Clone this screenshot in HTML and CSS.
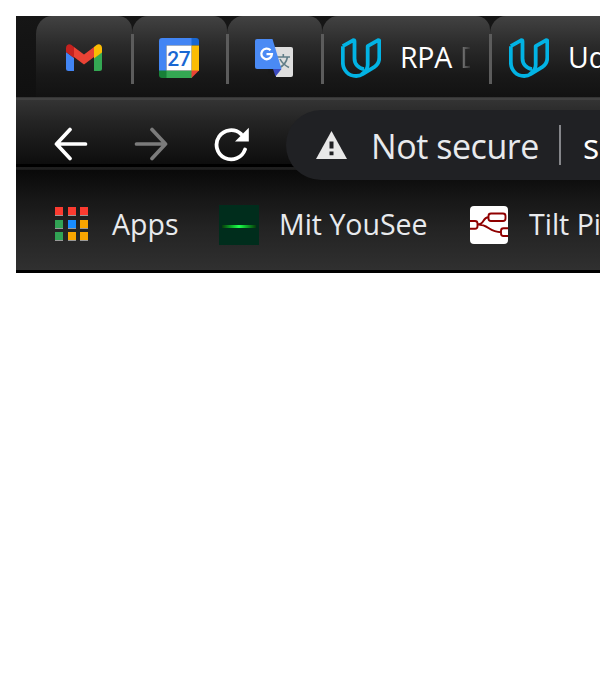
FILE: index.html
```html
<!DOCTYPE html>
<html lang="en">
<head>
<meta charset="utf-8">
<title>Browser</title>
<link rel="stylesheet" href="styles.css">
</head>
<body>
<svg width="0" height="0" class="defs" aria-hidden="true">
  <symbol id="udacity" viewBox="0 0 40 40">
    <path d="M1.800 8.200 12 2.300Q13.500 1.600 13.500 3.500V20.500C13.500 26 17.200 30.400 23 31.100M1.800 8.200V24C1.800 32.600 7.700 38 15.200 38C18 38 20 37.300 22 36L33.500 28.800C37 26.500 38.300 23.500 38.300 19.500V3.500Q38.300 1.600 36.800 2.300L26.700 8.200V27C26.700 30 25.200 33.200 20.500 36.500" fill="none" stroke="#02b3e4" stroke-width="3.800" stroke-linejoin="round"/>
  </symbol>
</svg>
<div class="browser">
  <div class="tabs">
    <div class="tab">
      <svg class="gmail" viewBox="0 0 36 27">
        <path d="M0 8 8 14V27H2.500Q0 27 0 24.500Z" fill="#4285f4"/>
        <path d="M28 14 36 8V24.500Q36 27 33.500 27H28Z" fill="#34a853"/>
        <path d="M28 3 30.500 1C33 -1 36 1 36 4V8.500L28 14.500Z" fill="#fbbc04"/>
        <path d="M8 3 18 10.500 28 3V13L18 20.500 8 13Z" fill="#ea4335"/>
        <path d="M0 4C0 1 3 -1 5.500 1L8 3V14L0 8Z" fill="#c5221f"/>
      </svg>
    </div>
    <div class="tab">
      <svg class="calendar" viewBox="0 0 40 40">
        <path d="M3 0H33V7.500H7.500V33H0V3Q0 0 3 0Z" fill="#4285f4"/>
        <path d="M33 0H37Q40 0 40 3V7.500H32.500V0Z" fill="#1967d2"/>
        <path d="M32.500 7.500H40V33H32.500Z" fill="#fbbc04"/>
        <path d="M7 32.500H33V40H7Z" fill="#34a853"/>
        <path d="M0 32.500H7.500V40H3Q0 40 0 37Z" fill="#188038"/>
        <path d="M32.500 32.500H40L32.500 40Z" fill="#ea4335"/>
        <path d="M7.500 7.500H32.500V32.500H7.500Z" fill="#fff"/>
        <text x="19.700" y="27.500" text-anchor="middle" class="day">27</text>
      </svg>
    </div>
    <div class="tab">
      <svg class="translate" viewBox="0 0 38 38">
        <rect x="13" y="8" width="25" height="30" rx="2" fill="#dedede"/>
        <path d="M22 18H35M28.300 15V18M32.500 18C31.500 23 28 27 24 29M25 20C27 24 30 26.500 34 28.500" fill="none" stroke="#607d87" stroke-width="1.600"/>
        <path d="M13 30H21V38H13Z" fill="#191919"/>
        <path d="M18 30H26.500L20.500 37.500Z" fill="#3a49bd"/>
        <path d="M2 0H17.500L26.500 30H2Q0 30 0 28V2Q0 0 2 0Z" fill="#4a8af4"/>
        <path d="M15.500 11.300A5.300 5.300 0 1 0 16.900 15.200H11.500" fill="none" stroke="#fff" stroke-width="2.300"/>
      </svg>
    </div>
    <div class="tab wide">
      <svg class="udacity"><use href="#udacity"/></svg>
      <span class="title"><span class="rpa">RPA</span> <span class="fade">D</span></span>
    </div>
    <div class="tab wide last">
      <svg class="udacity"><use href="#udacity"/></svg>
      <span class="title">Ud</span>
    </div>
  </div>
  <div class="toolbar">
    <svg class="arrow" viewBox="0 0 34 34"><path d="M16 2.500 2.500 17 16 31.500M2.500 17H31.500"/></svg>
    <svg class="arrow forward" viewBox="0 0 34 34"><path d="M18 2.500 31.500 17 18 31.500M31.500 17H2.500"/></svg>
    <svg class="reload" viewBox="0 0 36 36">
      <path d="M27 8A14.600 14.600 0 1 0 31 23.500" fill="none" stroke="#fff" stroke-width="3.800" stroke-linecap="round"/>
      <path d="M34.800 1.700V15.500H21Z" fill="#fff"/>
    </svg>
    <div class="address">
      <svg class="warning" viewBox="0 0 31 28"><path d="M15.500 0 31 28H0Z" fill="#e8e8e8"/><path d="M13.500 10.500H17.500V17.500H13.500ZM13.500 20.500H17.500V24.300H13.500Z" fill="#202124"/></svg>
      <span class="security">Not secure</span>
      <span class="divider"></span>
      <span class="url">s</span>
    </div>
  </div>
  <div class="bookmarks">
    <div class="apps">
      <i class="red"></i><i class="red"></i><i class="red"></i>
      <i class="green"></i><i class="blue"></i><i class="yellow"></i>
      <i class="green"></i><i class="yellow"></i><i class="yellow"></i>
    </div>
    <span class="label apps-label">Apps</span>
    <div class="yousee"><b></b></div>
    <span class="label yousee-label">Mit YouSee</span>
    <svg class="tilt" viewBox="0 0 38 38">
      <rect width="38" height="38" rx="4" fill="#fff"/>
      <g fill="none" stroke="#8f0000" stroke-width="1.900">
        <rect x="18.500" y="7.500" width="17" height="7.500" rx="2.500"/>
        <path d="M0 15H5Q7.500 15 7.500 17.500V20.300Q7.500 22.800 5 22.800H0M38 22.300H33.500Q31 22.300 31 24.800V27.500Q31 30 33.500 30H38M7.500 18.500C15 18.500 12 11.500 18.500 11.300M8 18.500C18 18 19 26.200 31 26.200"/>
      </g>
    </svg>
    <span class="label tilt-label">Tilt Pi</span>
  </div>
</div>
</body>
</html>
```
FILE: styles.css
```css
* { box-sizing: border-box; }
body {
  margin: 0;
  padding: 16px 0 0 16px;
  background: #fff;
  overflow: hidden;
  font-family: "Open Sans", "Noto Sans", sans-serif;
}
.defs { position: absolute; }
svg { display: block; flex: none; }
.browser {
  width: 584px;
  height: 257px;
  overflow: hidden;
  background: #111;
}
.tabs {
  display: flex;
  height: 81px;
  padding-left: 20px;
  background: linear-gradient(#161616, #101010);
}
.tab {
  display: flex;
  flex: none;
  align-items: center;
  width: 95px;
  padding: 0 0 0 27px;
  height: 81px;
  position: relative;
  border-radius: 16px 14px 0 0 / 18px 14px 0 0;
  background: linear-gradient(#424242, #2b2b2b 35%, #191919 72%, #121212);
}
.tab:first-child { width: 96px; padding-left: 30px; }
.tab::after {
  content: "";
  position: absolute;
  z-index: 1;
  right: -2px;
  top: 18px;
  width: 3px;
  height: 50px;
  background: #5c5c5c;
}
.tab.wide { width: 168px; padding-left: 19px; }
.tab.last::after { display: none; }
.gmail { width: 36px; height: 27px; margin-top: 2px; }
.calendar { width: 40px; height: 40px; margin-top: 3px; }
.day {
  font: 500 21px Roboto, sans-serif;
  letter-spacing: -0.500px;
  fill: #1967d2;
}
.translate { width: 38px; height: 38px; margin: 3px 0 0 1px; }
.udacity { width: 40px; height: 40px; margin-top: 3px; }
.title {
  display: flex;
  margin: 1px 0 0 19px;
  color: #fff;
  font-size: 28.500px;
  line-height: 40px;
  white-space: nowrap;
}
.rpa { width: 60px; letter-spacing: -0.300px; }
.fade {
  width: 10px;
  overflow: hidden;
  color: transparent;
  background: linear-gradient(90deg, #888, #333);
  -webkit-background-clip: text;
  background-clip: text;
}
.toolbar {
  display: flex;
  height: 73px;
  padding: 0 0 0 38px;
  border-top: 1px solid #353535;
  box-shadow: inset 0 2px #414141;
  background: linear-gradient(#353535, #232323 35%, #0d0d0d 92%, #000 92%, #000 96%, #1e1e1e 96%, #202020 99%, #111);
}
.arrow {
  width: 34px;
  height: 34px;
  margin-top: 29px;
  fill: none;
  stroke: #fff;
  stroke-width: 3.700;
  stroke-linecap: round;
  stroke-linejoin: round;
}
.forward { margin-left: 46px; stroke: #7b7b7b; }
.reload { width: 36px; height: 36px; margin: 28px 0 0 46px; }
.address {
  position: relative;
  z-index: 1;
  display: flex;
  flex: none;
  align-items: center;
  width: 400px;
  height: 70px;
  margin: 12px 0 0 36px;
  padding-left: 30px;
  border-radius: 35px 0 0 35px;
  background: #202124;
  color: #e8eaed;
  font-size: 34px;
  line-height: 48px;
  white-space: nowrap;
}
.warning { width: 31px; height: 28px; }
.security { width: 188px; margin: 1px 0 0 24px; letter-spacing: -0.450px; }
.divider { width: 2px; height: 40px; background: #85868a; }
.url { margin: 1px 0 0 22px; color: #fff; }
.bookmarks {
  display: flex;
  align-items: center;
  height: 103px;
  padding: 8px 0 0 38px;
  border-bottom: 3px solid #000;
  background: linear-gradient(#090909, #151515 25%, #232323 58%, #303030);
}
.apps {
  display: grid;
  grid-template-columns: repeat(3, 8px);
  grid-auto-rows: 9px;
  gap: 3.500px 4.500px;
  flex: none;
  width: 33px;
  margin-left: 1px;
}
.apps i { border-bottom: 1px solid #999; }
.red { background: #fb3b30; }
.green { background: #31a354; }
.blue { background: #198cff; }
.yellow { background: #f9a500; }
.label {
  flex: none;
  color: #e8eaed;
  font-size: 28.500px;
  line-height: 40px;
  white-space: nowrap;
}
.apps-label { width: 107px; margin-left: 24px; }
.yousee {
  display: flex;
  flex: none;
  align-items: center;
  justify-content: center;
  width: 40px;
  height: 40px;
  margin-top: 1px;
  background: #002d1c;
}
.yousee b {
  width: 34px;
  height: 3px;
  margin-top: 3px;
  background: linear-gradient(90deg, #063b0b, #0cb52b 30%, #20ff50 50%, #0cb52b 70%, #063b0b);
}
.yousee-label { width: 191px; margin-left: 20px; }
.tilt { width: 38px; height: 38px; margin-top: 1px; }
.tilt-label { margin-left: 21px; }
```
